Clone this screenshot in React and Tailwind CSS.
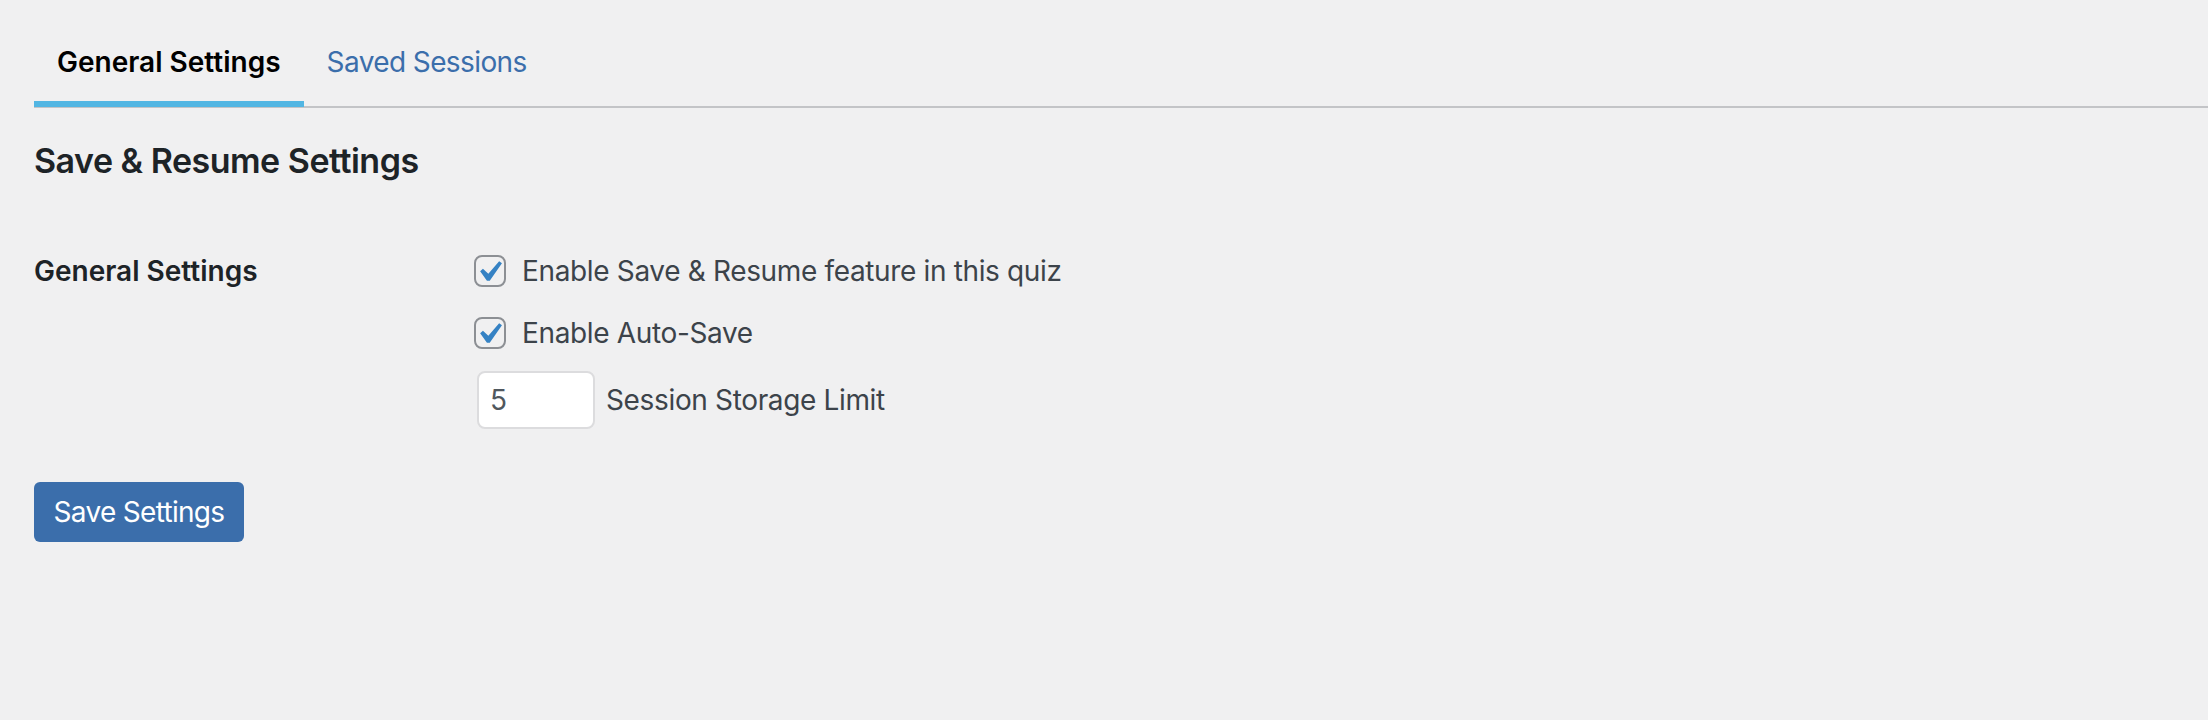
import React from "react";

function Check() {
  return (
    <div className="relative w-[32px] h-[32px] shrink-0 rounded-[8px] border-2 border-[#8c8f94] bg-[#f0f0f1]">
      <svg
        className="absolute left-[-8px] top-[-6px] w-[42px] h-[42px]"
        viewBox="0 0 20 20"
      >
        <path
          d="M14.83 4.89l1.34.94-5.81 8.38H9.02L5.78 9.67l1.34-1.25 2.57 2.4z"
          fill="#3582c4"
        />
      </svg>
    </div>
  );
}

export default function App() {
  return (
    <div
      className="min-h-[720px] w-full bg-[#f0f0f1] pl-[34px] pt-[28px]"
      style={{ fontFamily: "Inter, 'Noto Sans', sans-serif" }}
    >
      <div className="flex border-b-2 border-[#c3c4c7]">
        <div className="-mb-[1px] px-[23px] pt-[10px] pb-[15px] border-b-[6px] border-[#52b6e3] text-[28px] leading-[48px] font-semibold text-black">
          General Settings
        </div>
        <div className="-mb-[1px] px-[23px] pt-[10px] pb-[15px] border-b-[6px] border-transparent text-[28px] leading-[48px] tracking-[-0.6px] text-[#3b6eab]">
          Saved Sessions
        </div>
      </div>

      <h2 className="mt-[31px] text-[34px] leading-[44px] font-semibold tracking-[-0.5px] text-[#1d2327]">
        Save &amp; Resume Settings
      </h2>

      <div className="mt-[68px] flex">
        <div className="w-[440px] shrink-0 text-[28px] leading-[40px] font-semibold text-[#1d2327]">
          General Settings
        </div>
        <div className="flex flex-col text-[28px] tracking-[-0.35px] text-[#3c434a]">
          <div className="flex h-[40px] items-center gap-[16px]">
            <Check />
            <span className="leading-[40px]">Enable Save &amp; Resume feature in this quiz</span>
          </div>
          <div className="mt-[22px] flex h-[40px] items-center gap-[16px]">
            <Check />
            <span className="leading-[40px]">Enable Auto-Save</span>
          </div>
          <div className="mt-[18px] flex items-center gap-[11px]">
            <div className="ml-[3px] flex h-[58px] w-[118px] items-center rounded-[8px] border-2 border-[#dcdcde] bg-white pl-[11px] text-[28px] text-[#50575e]">
              5
            </div>
            <span className="leading-[40px]">Session Storage Limit</span>
          </div>
        </div>
      </div>

      <button className="mt-[53px] flex h-[60px] w-[210px] items-center justify-center rounded-[6px] bg-[#3b6eab] text-[28px] tracking-[-0.7px] text-white">
        Save Settings
      </button>
    </div>
  );
}
